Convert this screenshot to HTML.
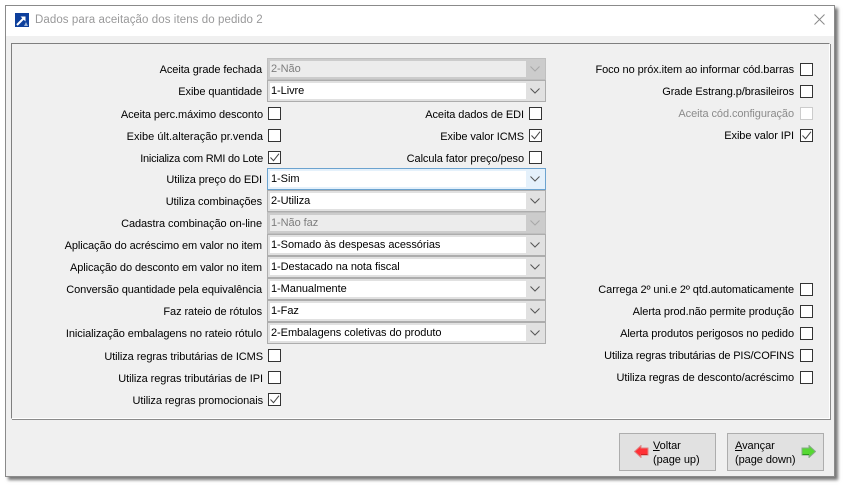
<!DOCTYPE html>
<html><head><meta charset="utf-8">
<style>
html,body{margin:0;padding:0;background:#fff}
body{width:858px;height:493px;position:relative;overflow:hidden;font-family:"Liberation Sans",sans-serif;font-size:11px;color:#000}
#win{position:absolute;left:5px;top:5px;width:828px;height:470px;background:#f0f0f0;border:1px solid #8a8a8a;box-shadow:3px 3px 3px #777}
#tb{position:absolute;left:6px;top:6px;width:828px;height:30px;background:#fff}
#ttl{position:absolute;left:35px;top:14px;font-size:11.5px;color:#99999a;white-space:nowrap;letter-spacing:.08px}
#panel{position:absolute;left:11px;top:43px;width:817px;height:374px;border:1px solid #7f7f7f;border-right-color:#fff;border-bottom-color:#fff;outline:0;box-shadow:1px 1px 0 #8a8a8a}
.l{position:absolute;white-space:nowrap;text-align:right;height:14px;line-height:14px;letter-spacing:-.08px;margin-top:1px}
.a{right:596px}.e{right:595px}.b{right:334px}.c{right:64px;margin-top:0}
.d{color:#8b8b8b}
.k{position:absolute;width:11px;height:11px;border:1px solid #333;background:#fff}
.k.o{border-color:#ccc}
.k svg{position:absolute;left:0;top:0}
.s{position:absolute;left:267px;width:277px;height:20px;border:1px solid #adadad;background:#e1e1e1}
.s i{position:absolute;left:2px;top:2px;width:256px;height:16px;background:#fff;font-style:normal;line-height:16px;padding-left:1px;box-sizing:border-box;letter-spacing:-.06px;white-space:nowrap}
.s svg{position:absolute;left:262px;top:7px}
.s.f{border-color:#6ca3cf;background:#e5f1fb}
.s.x{background:#ccc;border-color:#bfbfbf}
.s.x i{background:#ececec;color:#7d7d7d}
.bt{position:absolute;top:433px;width:95px;height:36px;border:1px solid #adadad;background:#e1e1e1;line-height:14px}
.bt span{position:absolute;white-space:nowrap;letter-spacing:-.06px}
.bt svg{position:absolute}
</style></head><body>
<div id="win"></div>
<div id="tb"></div>
<svg style="position:absolute;left:15px;top:13px" width="14" height="14" viewBox="0 0 14 14"><rect width="14" height="14" fill="#0d3f9c"/><path d="M2 12 L9 5" stroke="#fff" stroke-width="2"/><path d="M5.5 3.5H10.5V8.5Z" fill="#fff"/><path d="M9 13l2-4 2 4z" fill="#9fb6d8"/></svg>
<div id="ttl">Dados para aceitação dos itens do pedido 2</div>
<svg style="position:absolute;left:814px;top:14px" width="11" height="11" viewBox="0 0 11 11"><path d="M.5.5l10 10M10.5.5l-10 10" stroke="#8a8a8a" stroke-width="1" fill="none"/></svg>
<div id="panel"></div>

<div class="l a" style="top:62px">Aceita grade fechada</div>
<div class="l a" style="top:84px">Exibe quantidade</div>
<div class="l e" style="top:107px">Aceita perc.máximo desconto</div>
<div class="l e" style="top:129px;letter-spacing:.02px">Exibe últ.alteração pr.venda</div>
<div class="l e" style="top:151px;letter-spacing:-.24px">Inicializa com RMI do Lote</div>
<div class="l a" style="top:172px">Utiliza preço do EDI</div>
<div class="l a" style="top:194px">Utiliza combinações</div>
<div class="l a" style="top:216px">Cadastra combinação on-line</div>
<div class="l a" style="top:238px">Aplicação do acréscimo em valor no item</div>
<div class="l a" style="top:260px">Aplicação do desconto em valor no item</div>
<div class="l a" style="top:282px">Conversão quantidade pela equivalência</div>
<div class="l a" style="top:304px">Faz rateio de rótulos</div>
<div class="l a" style="top:326px">Inicialização embalagens no rateio rótulo</div>
<div class="l e" style="top:349px">Utiliza regras tributárias de ICMS</div>
<div class="l e" style="top:371px">Utiliza regras tributárias de IPI</div>
<div class="l e" style="top:393px">Utiliza regras promocionais</div>

<div class="l b" style="top:107px">Aceita dados de EDI</div>
<div class="l b" style="top:129px">Exibe valor ICMS</div>
<div class="l b" style="top:151px">Calcula fator preço/peso</div>

<div class="l c" style="top:63px">Foco no próx.item ao informar cód.barras</div>
<div class="l c" style="top:85px">Grade Estrang.p/brasileiros</div>
<div class="l c d" style="top:107px">Aceita cód.configuração</div>
<div class="l c" style="top:129px">Exibe valor IPI</div>
<div class="l c" style="top:283px">Carrega 2º uni.e 2º qtd.automaticamente</div>
<div class="l c" style="top:305px">Alerta prod.não permite produção</div>
<div class="l c" style="top:327px">Alerta produtos perigosos no pedido</div>
<div class="l c" style="top:349px;letter-spacing:-.16px">Utiliza regras tributárias de PIS/COFINS</div>
<div class="l c" style="top:371px">Utiliza regras de desconto/acréscimo</div>

<div class="k" style="left:268px;top:107px"></div>
<div class="k" style="left:268px;top:129px"></div>
<div class="k" style="left:268px;top:151px"><svg width="11" height="11"><path d="M1.5 5.5l3 3.2 5.5-7" stroke="#444" fill="none"/></svg></div>
<div class="k" style="left:268px;top:349px"></div>
<div class="k" style="left:268px;top:371px"></div>
<div class="k" style="left:268px;top:393px"><svg width="11" height="11"><path d="M1.5 5.5l3 3.2 5.5-7" stroke="#444" fill="none"/></svg></div>
<div class="k" style="left:529px;top:107px"></div>
<div class="k" style="left:529px;top:129px"><svg width="11" height="11"><path d="M1.5 5.5l3 3.2 5.5-7" stroke="#444" fill="none"/></svg></div>
<div class="k" style="left:529px;top:151px"></div>
<div class="k" style="left:800px;top:63px"></div>
<div class="k" style="left:800px;top:85px"></div>
<div class="k o" style="left:800px;top:107px"></div>
<div class="k" style="left:800px;top:129px"><svg width="11" height="11"><path d="M1.5 5.5l3 3.2 5.5-7" stroke="#444" fill="none"/></svg></div>
<div class="k" style="left:800px;top:283px"></div>
<div class="k" style="left:800px;top:305px"></div>
<div class="k" style="left:800px;top:327px"></div>
<div class="k" style="left:800px;top:349px"></div>
<div class="k" style="left:800px;top:371px"></div>

<div class="s x" style="top:58px"><i>2-Não</i><svg width="10" height="6"><path d="M.5.5l4.5 4.5 4.5-4.5" stroke="#a8a8a8" fill="none"/></svg></div>
<div class="s" style="top:80px"><i>1-Livre</i><svg width="10" height="6"><path d="M.5.5l4.5 4.5 4.5-4.5" stroke="#555" fill="none"/></svg></div>
<div class="s f" style="top:168px"><i>1-Sim</i><svg width="10" height="6"><path d="M.5.5l4.5 4.5 4.5-4.5" stroke="#555" fill="none"/></svg></div>
<div class="s" style="top:190px"><i>2-Utiliza</i><svg width="10" height="6"><path d="M.5.5l4.5 4.5 4.5-4.5" stroke="#555" fill="none"/></svg></div>
<div class="s x" style="top:212px"><i>1-Não faz</i><svg width="10" height="6"><path d="M.5.5l4.5 4.5 4.5-4.5" stroke="#a8a8a8" fill="none"/></svg></div>
<div class="s" style="top:234px"><i>1-Somado às despesas acessórias</i><svg width="10" height="6"><path d="M.5.5l4.5 4.5 4.5-4.5" stroke="#555" fill="none"/></svg></div>
<div class="s" style="top:256px"><i>1-Destacado na nota fiscal</i><svg width="10" height="6"><path d="M.5.5l4.5 4.5 4.5-4.5" stroke="#555" fill="none"/></svg></div>
<div class="s" style="top:278px"><i>1-Manualmente</i><svg width="10" height="6"><path d="M.5.5l4.5 4.5 4.5-4.5" stroke="#555" fill="none"/></svg></div>
<div class="s" style="top:300px"><i>1-Faz</i><svg width="10" height="6"><path d="M.5.5l4.5 4.5 4.5-4.5" stroke="#555" fill="none"/></svg></div>
<div class="s" style="top:322px"><i>2-Embalagens coletivas do produto</i><svg width="10" height="6"><path d="M.5.5l4.5 4.5 4.5-4.5" stroke="#555" fill="none"/></svg></div>

<div class="bt" style="left:619px">
<svg style="left:14px;top:11px" width="15" height="13" viewBox="0 0 15 13"><path d="M.5 6.5L7 .5V3H14V10H7V12.5Z" fill="#ff3036" stroke="#d88"/><path d="M7 9.5H13.5" stroke="#c22" fill="none"/></svg>
<span style="left:33px;top:5px"><u>V</u>oltar</span><span style="left:33px;top:19px">(page up)</span>
</div>
<div class="bt" style="left:727px">
<svg style="left:73px;top:11px" width="15" height="13" viewBox="0 0 15 13"><path d="M14.5 6.5L8 .5V3H1V10H8V12.5Z" fill="#55d832" stroke="#8a8"/><path d="M1.5 9.5H8" stroke="#2a9a1a" fill="none"/></svg>
<span style="left:7px;top:5px"><u>A</u>vançar</span><span style="left:7px;top:19px">(page down)</span>
</div>
</body></html>
